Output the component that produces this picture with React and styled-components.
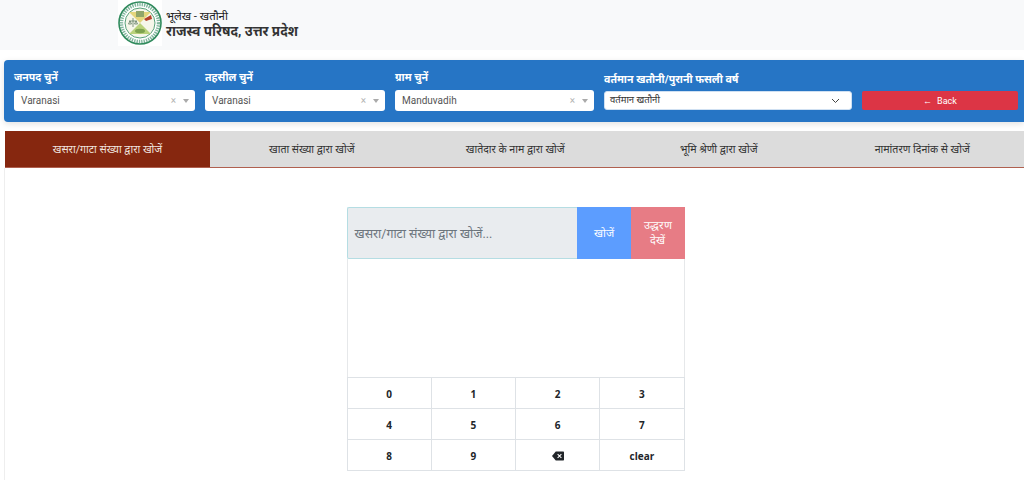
import React from "react";
import styled, { createGlobalStyle } from "styled-components";

const Global = createGlobalStyle`
  html, body { margin: 0; padding: 0; background: #fff; }
  body { font-family: Roboto, "Noto Sans", "Noto Sans Devanagari", "Lohit Devanagari", "DejaVu Sans", sans-serif; overflow: hidden; }
  * { box-sizing: border-box; }
`;
const Page = styled.div`width: 1024px; height: 480px; overflow: hidden; display: flex; flex-direction: column;`;
const Header = styled.header`height: 50px; background: #f8f9fa; padding-left: 118px; display: flex; align-items: flex-start; gap: 4px; flex: none;`;
const LogoBox = styled.div`width: 44px; height: 46px; background: #fff; display: flex; align-items: center; justify-content: center;`;
const Titles = styled.div`padding-top: 10px; display: flex; flex-direction: column;`;
const SubTitle = styled.div`font-size: 11.4px; line-height: 13px; color: #222;`;
const Title = styled.div`font-size: 13.5px; line-height: 16px; font-weight: 700; color: #333;`;
const FilterBar = styled.section`
  flex: none; margin: 10px 0 0 4px; height: 62px; background: #2675c5; border-radius: 4px 0 0 4px;
  box-shadow: 0 2px 6px rgba(0,0,0,.12); padding: 8px 6px 0 10px; display: flex; gap: 10px;
`;
const Field = styled.div`width: ${p => p.$w}px; flex: none; display: flex; flex-direction: column;`;
const Label = styled.label`font-size: 10.6px; font-weight: 700; line-height: 20px; height: 22px; padding-top: ${p => p.$tall ? 2 : 0}px; color: #fff; white-space: nowrap;`;
const SelectBox = styled.div`
  height: 21px; background: #fff; border-radius: 3px; display: flex; align-items: center; padding: 0 6px 0 7px;
  font-size: 10px; color: #555;
`;
const SelectValue = styled.span`flex: 1;`;
const NativeValue = styled.span`flex: 1; padding-bottom: 3px;`;
const Clear = styled.span`font-size: 10px; color: #b5b5b5; margin-right: 7px; line-height: 1;`;
const Caret = styled.span`width: 0; height: 0; border-left: 3.5px solid transparent; border-right: 3.5px solid transparent; border-top: 4px solid #aaa;`;
const NativeSelect = styled(SelectBox)`margin-top: 1px; height: 19px; border: 1px solid #cfe0f2; padding: 0 11px 0 5px; color: #333; font-size: 9.5px;`;
const BackCol = styled.div`flex: none; width: 156px; padding-top: 23px;`;
const BackButton = styled.button`
  width: 100%; height: 19px; border: 0; border-radius: 2px; background: #dc3545; color: #fff; font: 400 9px Roboto, sans-serif;
  display: flex; align-items: center; justify-content: center; gap: 5px; padding: 0;
`;
const Tabs = styled.nav`flex: none; margin: 9px 0 0 5px; height: 37px; display: flex; background: #dcdcdc; border-bottom: 1px solid #b0604f;`;
const Tab = styled.div`
  flex: ${p => p.$active ? "0 0 205px" : "1"}; display: flex; align-items: center; justify-content: center; font-size: 10.6px;
  background: ${p => p.$active ? "#86270f" : "transparent"}; color: ${p => p.$active ? "#f0e4df" : "#333"};
  font-weight: 400; white-space: nowrap;
`;
const Content = styled.main`flex: 1; display: flex; justify-content: center; padding: 39px 0 0 2px; border-left: 1px solid #eee; margin-left: 4px;`;
const Panel = styled.div`width: 338px; display: flex; flex-direction: column;`;
const SearchRow = styled.div`height: 52px; display: flex;`;
const SearchInput = styled.div`
  width: 230px; background: #e9ecef; border: 1px solid #b5dde3; border-right: 0; border-radius: 2px 0 0 2px;
  display: flex; align-items: center; padding: 0 7px; font-size: 12.4px; color: #6c757d; white-space: nowrap;
`;
const ActionButton = styled.button`
  width: 54px; border: 0; padding: 0 8px; background: ${p => p.$bg}; color: #fff; font: 400 11px/15px Roboto, sans-serif; text-align: center;
`;
const Blank = styled.div`height: 118px; border: 1px solid #e6e8ea; border-top: 0; border-bottom: 0;`;
const Keypad = styled.div`display: grid; grid-template-columns: repeat(4, 1fr); border-top: 1px solid #dee2e6; border-left: 1px solid #dee2e6;`;
const Key = styled.button`
  height: 31px; border: 0; border-right: 1px solid #dee2e6; border-bottom: 1px solid #dee2e6; background: #fff;
  font: 700 10px "Open Sans", sans-serif; color: #212529; display: flex; align-items: center; justify-content: center; padding: 1px 0 0;
`;

const Seal = () => (
  <svg width="44" height="44" viewBox="0 0 44 44">
    <circle cx="22" cy="22" r="21" fill="#fff" stroke="#2f8a5c" strokeWidth="1.6" />
    <circle cx="22" cy="22" r="18.6" fill="none" stroke="#3d8f68" strokeWidth="3.6" strokeDasharray="1.4 1" opacity=".65" />
    <circle cx="22" cy="22" r="15" fill="#f6f6ea" stroke="#2f8a5c" strokeWidth=".8" />
    <path d="M11 11 L33 11 L22 22Z" fill="#e4d67c" />
    <path d="M11 33 L33 33 L22 22Z" fill="#b9d27b" />
    <path d="M26 18 L33 14 L34 18 L28 20Z" fill="#b5402a" />
    <path d="M11 20h8M15 17v9M12 20l-1.5 3h3zM18 20l-1.5 3h3z" stroke="#4f6d52" strokeWidth=".7" fill="none" />
    <rect x="18" y="10" width="8" height="6" fill="#8fa56a" />
    <ellipse cx="22" cy="30" rx="5" ry="2.2" fill="#7ea24f" />
  </svg>
);
const Backspace = () => (
  <svg width="12" height="10" viewBox="0 0 16 12">
    <path d="M5 0h10a1 1 0 0 1 1 1v10a1 1 0 0 1-1 1H5L0 6z" fill="#212529" />
    <path d="M7.5 3.5l5 5M12.5 3.5l-5 5" stroke="#fff" strokeWidth="1.4" />
  </svg>
);

const selects = [
  { label: "जनपद चुनें", value: "Varanasi", w: 181 },
  { label: "तहसील चुनें", value: "Varanasi", w: 180 },
  { label: "ग्राम चुनें", value: "Manduvadih", w: 199 },
];
const tabs = ["खसरा/गाटा संख्या द्वारा खोजें", "खाता संख्या द्वारा खोजें", "खातेदार के नाम द्वारा खोजें", "भूमि श्रेणी द्वारा खोजें", "नामांतरण दिनांक से खोजें"];
const keys = ["0","1","2","3","4","5","6","7","8","9"];

export default function App() {
  return (
    <Page>
      <Global />
      <Header>
        <LogoBox><Seal /></LogoBox>
        <Titles>
          <SubTitle>भूलेख - खतौनी</SubTitle>
          <Title>राजस्व परिषद, उत्तर प्रदेश</Title>
        </Titles>
      </Header>
      <FilterBar>
        {selects.map(s => (
          <Field key={s.label} $w={s.w}>
            <Label>{s.label}</Label>
            <SelectBox>
              <SelectValue>{s.value}</SelectValue>
              <Clear>×</Clear>
              <Caret />
            </SelectBox>
          </Field>
        ))}
        <Field $w={248}>
          <Label $tall>वर्तमान खतौनी/पुरानी फसली वर्ष</Label>
          <NativeSelect>
            <NativeValue>वर्तमान खतौनी</NativeValue>
            <svg width="9" height="6" viewBox="0 0 9 6"><path d="M1 1l3.5 3.5L8 1" fill="none" stroke="#444" strokeWidth="1" /></svg>
          </NativeSelect>
        </Field>
        <BackCol><BackButton><span>←</span> Back</BackButton></BackCol>
      </FilterBar>
      <Tabs>
        {tabs.map((t, i) => <Tab key={t} $active={i === 0}>{t}</Tab>)}
      </Tabs>
      <Content>
        <Panel>
          <SearchRow>
            <SearchInput>खसरा/गाटा संख्या द्वारा खोजें...</SearchInput>
            <ActionButton $bg="#5c9dff">खोजें</ActionButton>
            <ActionButton $bg="#e77c85">उद्धरण देखें</ActionButton>
          </SearchRow>
          <Blank />
          <Keypad>
            {keys.map(k => <Key key={k}>{k}</Key>)}
            <Key aria-label="backspace"><Backspace /></Key>
            <Key>clear</Key>
          </Keypad>
        </Panel>
      </Content>
    </Page>
  );
}
